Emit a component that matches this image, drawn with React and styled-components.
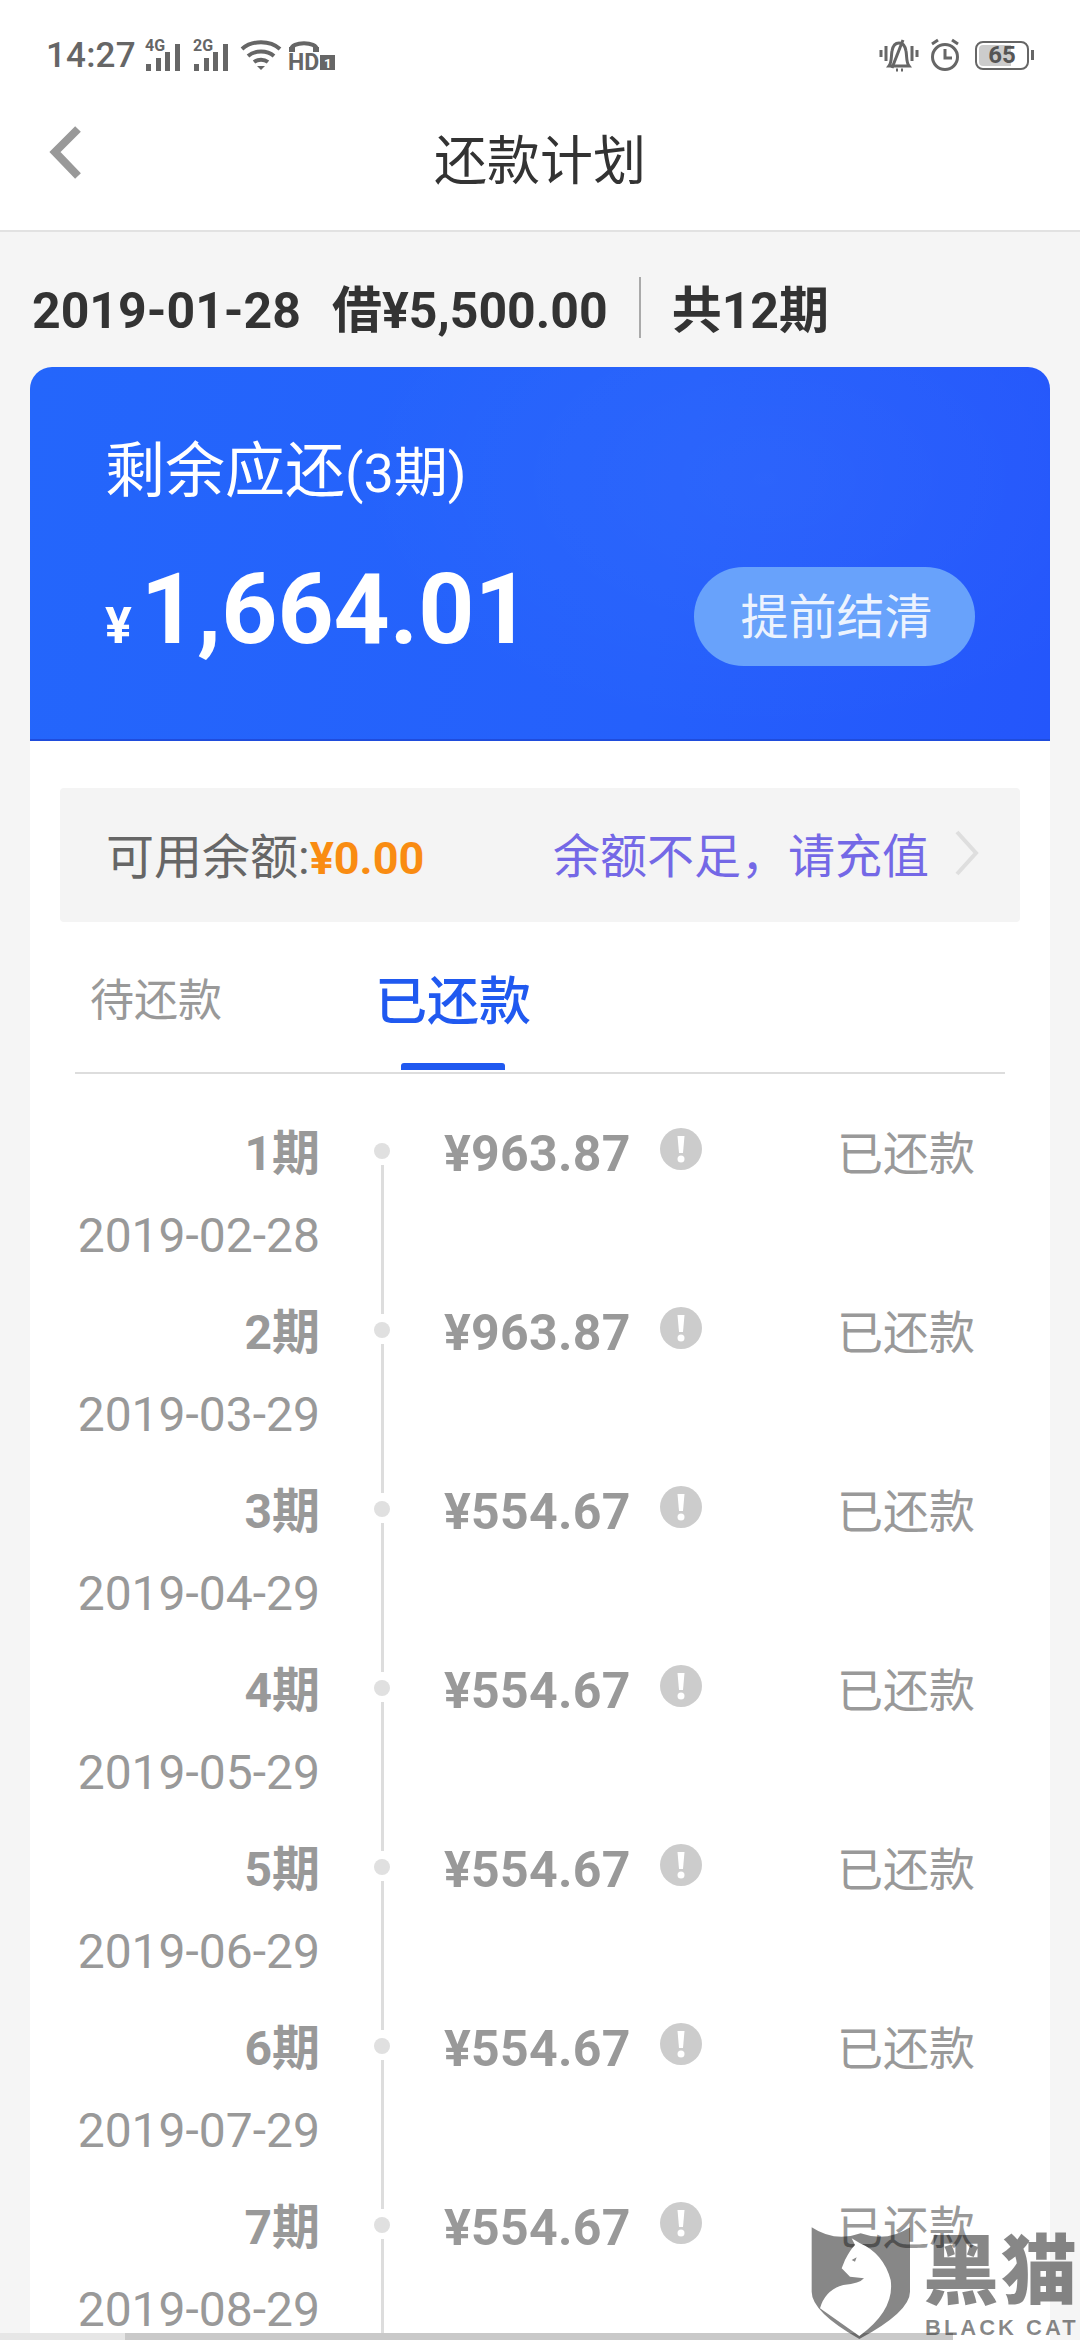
import React from "react";
import styled, { createGlobalStyle } from "styled-components";

const GlobalStyle = createGlobalStyle`
  html, body {
    margin: 0;
    padding: 0;
    background: #f5f5f5;
  }
  * {
    box-sizing: border-box;
  }
`;

const FONT = `Roboto, "Noto Sans CJK SC", sans-serif`;

const Page = styled.div`
  position: relative;
  width: 1080px;
  height: 2340px;
  overflow: hidden;
  background: #f5f5f5;
  font-family: ${FONT};
`;

const Header = styled.header`
  height: 232px;
  background: #fff;
  border-bottom: 2px solid #e2e2e2;
`;

const StatusBar = styled.div`
  height: 84px;
  padding: 26px 51px 0 46px;
  display: flex;
  align-items: center;
  justify-content: space-between;
  color: #666;
`;

const StatusGroup = styled.div`
  display: flex;
  align-items: center;
`;

const Time = styled.span`
  font-size: 35px;
  font-weight: 500;
  letter-spacing: 0.2px;
  margin-right: 8px;
`;

const Battery = styled.div`
  position: relative;
  width: 54px;
  height: 29px;
  margin-left: 14px;
  border: 2.5px solid #666;
  border-radius: 8px;
  display: flex;
  align-items: center;
  justify-content: center;
  font-size: 24px;
  font-weight: 700;
  color: #555;
  background: linear-gradient(to right, #ccc 0 68%, #fff 68%);
  background-clip: content-box;
  padding: 2px;

  &::after {
    content: "";
    position: absolute;
    right: -7px;
    top: 7px;
    width: 3px;
    height: 10px;
    background: #666;
  }
`;

const NavBar = styled.div`
  position: relative;
  height: 146px;
  display: flex;
  align-items: center;
  justify-content: center;
`;

const BackButton = styled.button`
  position: absolute;
  left: 47px;
  top: 42px;
  padding: 0;
  border: 0;
  background: none;
  display: flex;
`;

const Title = styled.h1`
  margin: 0;
  font-size: 53px;
  font-weight: 400;
  color: #333;
`;

const Summary = styled.div`
  height: 135px;
  padding: 22px 0 0 32px;
  display: flex;
  align-items: center;
  font-size: 50px;
  line-height: 70px;
  font-weight: 700;
  color: #333;
  white-space: nowrap;
`;

const SummaryLoan = styled.span`
  margin-left: 31px;
`;

const SummaryDivider = styled.span`
  width: 2px;
  height: 61px;
  margin: 0 31px 6px;
  background: #aaa;
`;

const Card = styled.main`
  margin: 0 30px;
  background: #fff;
  border-radius: 22px 22px 0 0;
  overflow: hidden;
`;

const Hero = styled.section`
  height: 374px;
  padding: 67px 75px 0;
  color: #fff;
  border-bottom: 2px solid #1f4cdc;
  background:
    radial-gradient(ellipse 420px 260px at 72% 30%, rgba(255, 255, 255, 0.035), rgba(255, 255, 255, 0)),
    linear-gradient(100deg, #2466fb 0%, #2560fb 62%, #2456fb 100%);
`;

const HeroLabel = styled.div`
  font-size: 60px;
  line-height: 76px;
  white-space: nowrap;
`;

const HeroLabelSmall = styled.span`
  font-size: 54px;
`;

const HeroRow = styled.div`
  margin-top: 55px;
  display: flex;
  align-items: flex-start;
  justify-content: space-between;
`;

const HeroAmount = styled.div`
  display: flex;
  align-items: baseline;
  margin-top: -14px;
  font-weight: 700;
  line-height: 114px;
`;

const HeroCurrency = styled.span`
  font-size: 50px;
  margin-right: 9px;
`;

const HeroValue = styled.span`
  font-size: 98px;
`;

const SettleButton = styled.button`
  width: 281px;
  height: 99px;
  padding: 0 0 8px 4px;
  border: 0;
  border-radius: 50px;
  background: #68a2fb;
  color: rgba(255, 255, 255, 0.88);
  font-family: inherit;
  font-size: 48px;
`;

const Balance = styled.div`
  height: 134px;
  margin: 47px 30px 0;
  padding: 0 40px 5px 46px;
  display: flex;
  align-items: center;
  justify-content: space-between;
  border-radius: 4px;
  background: #f4f4f4;
  white-space: nowrap;
`;

const BalanceLabel = styled.span`
  font-size: 48px;
  color: #666;
`;

const BalanceValue = styled.span`
  font-size: 45px;
  font-weight: 700;
  color: #f98c12;
`;

const TopUp = styled.div`
  display: flex;
  align-items: center;
  gap: 25px;
  font-size: 47px;
  color: #7468e6;
`;

const Tabs = styled.div`
  height: 152px;
  margin: 0 45px;
  padding-left: 15px;
  display: flex;
  align-items: center;
  border-bottom: 2px solid #ddd;
`;

const Tab = styled.div`
  position: relative;
  width: ${({ $active }) => ($active ? "157px" : "132px")};
  margin-left: ${({ $active }) => ($active ? "153px" : "0")};
  font-size: ${({ $active }) => ($active ? "52px" : "44px")};
  font-weight: ${({ $active }) => ($active ? 500 : 400)};
  color: ${({ $active }) => ($active ? "#2059f0" : "#999")};
  white-space: nowrap;

  ${({ $active }) =>
    $active &&
    `
    &::after {
      content: "";
      position: absolute;
      left: 26px;
      bottom: -35px;
      width: 104px;
      height: 7px;
      border-radius: 3px 3px 0 0;
      background: #2059f0;
    }
  `}
`;

const List = styled.div`
  margin-top: 37px;
`;

const Row = styled.div`
  height: 179px;
  display: grid;
  grid-template-columns: 290px 124px 1fr auto;
  color: #999;
  padding-right: 75px;
`;

const RowWhen = styled.div`
  padding-top: 2px;
  text-align: right;
  white-space: nowrap;
`;

const Period = styled.div`
  font-size: 48px;
  font-weight: 700;
  line-height: 82px;
`;

const DueDate = styled.div`
  font-size: 48px;
  line-height: 82px;
`;

const Axis = styled.div`
  display: flex;
  flex-direction: column;
  align-items: center;
`;

const AxisLine = styled.span`
  width: 3px;
  background: ${({ $hidden }) => ($hidden ? "transparent" : "#ddd")};
  height: ${({ $top }) => ($top ? "24px" : "auto")};
  flex: ${({ $top }) => ($top ? "none" : 1)};
`;

const Dot = styled.span`
  width: 16px;
  height: 16px;
  margin: 8px 0 6px;
  border-radius: 50%;
  background: #e0e0e0;
`;

const Amount = styled.div`
  display: flex;
  align-items: flex-start;
  height: 82px;
  font-size: 50px;
  font-weight: 700;
  line-height: 86px;
  letter-spacing: 0.3px;
`;

const InfoIcon = styled.span`
  width: 42px;
  height: 42px;
  margin: 17px 0 0 29px;
  border-radius: 50%;
  background: #ccc;
  display: flex;
`;

const RowStatus = styled.div`
  font-size: 46px;
  line-height: 86px;
`;

const BottomShade = styled.div`
  position: absolute;
  left: 0;
  right: 127px;
  bottom: 0;
  height: 7px;
  background: linear-gradient(to right, #e6e6e6 0 125px, #c9c9c9 125px);
`;

const Watermark = styled.div`
  position: absolute;
  left: 800px;
  top: 2210px;
  width: 280px;
  height: 130px;
  display: flex;
`;

const Brand = styled.div`
  margin-left: 123px;
  padding-top: 20px;
  color: rgba(0, 0, 0, 0.47);
`;

const BrandName = styled.div`
  font-size: 76px;
  line-height: 84px;
  font-weight: 900;
  letter-spacing: 2px;
  white-space: nowrap;
`;

const BrandLatin = styled.div`
  margin: 2px 0 0 2px;
  font-family: "Liberation Sans", sans-serif;
  font-size: 22px;
  line-height: 24px;
  font-weight: 700;
  letter-spacing: 3px;
  white-space: nowrap;
`;

const LogoMark = styled.svg`
  position: absolute;
  left: 0;
  top: 0;
`;

const SignalText = styled.text`
  font-family: Roboto, sans-serif;
  font-weight: 700;
  font-size: 16px;
  fill: #666;
`;

const HdText = styled(SignalText)`
  font-size: 23px;
`;

const Signal = ({ label }) => (
  <svg width="48" height="44" viewBox="0 -5 48 44">
    <SignalText x="1" y="13">{label}</SignalText>
    <rect x="2" y="26" width="5" height="7" fill="#666" />
    <rect x="12" y="20" width="5" height="13" fill="#666" />
    <rect x="21" y="14" width="5" height="19" fill="#666" />
    <rect x="31" y="6" width="5" height="27" fill="#666" />
  </svg>
);

const WifiIcon = () => (
  <svg width="42" height="32" viewBox="0 0 42 32" fill="none" stroke="#666" strokeWidth="4">
    <path d="M2 10C12 1 30 1 40 10" />
    <path d="M8 17C15 11 27 11 34 17" />
    <path d="M14 23C18 20 24 20 28 23" />
    <path d="M17 27H25L21 31Z" fill="#666" stroke="none" />
  </svg>
);

const HdIcon = () => (
  <svg width="52" height="44" viewBox="0 -6 52 44" style={{ marginLeft: 6 }}>
    <path d="M3 11C3 2 29 2 29 11" fill="none" stroke="#666" strokeWidth="4" />
    <rect x="1" y="8" width="6" height="5" fill="#666" />
    <rect x="25" y="8" width="6" height="5" fill="#666" />
    <HdText x="0" y="31">HD</HdText>
    <rect x="32" y="16" width="15" height="15" fill="#666" />
    <text x="36" y="29" fontSize="13" fontWeight="700" fill="#fff" fontFamily="Roboto, sans-serif">1</text>
  </svg>
);

const MuteBellIcon = () => (
  <svg width="42" height="36" viewBox="0 0 42 36" fill="none" stroke="#666" strokeWidth="3">
    <path d="M11 29C14 25 13 19 14 14C15 8 18 6 21 6C24 6 27 8 28 14C29 19 28 25 31 29Z" />
    <path d="M14 31L25 3" />
    <path d="M18 33H20M23 33H25" />
    <path d="M8 9V24M3 13V20M34 9V24M39 13V20" />
  </svg>
);

const AlarmIcon = () => (
  <svg width="32" height="34" viewBox="0 0 32 34" fill="none" stroke="#666" strokeWidth="3" style={{ marginLeft: 9 }}>
    <circle cx="16" cy="19" r="12.5" />
    <path d="M16 11V20H23" />
    <path d="M3 6L9 2M29 6L23 2" />
  </svg>
);

const BackIcon = () => (
  <svg width="36" height="54" viewBox="0 0 36 54" fill="none" stroke="#999" strokeWidth="8">
    <path d="M31 3L8 26L31 50" />
  </svg>
);

const ChevronIcon = () => (
  <svg width="26" height="46" viewBox="0 0 26 46" fill="none" stroke="#dedede" strokeWidth="4">
    <path d="M3 2L22 23L3 44" />
  </svg>
);

const ExclamationIcon = () => (
  <svg width="42" height="42" viewBox="0 0 42 42" fill="#fff">
    <path d="M17.5 8H24.5L23 25H19Z" />
    <circle cx="21" cy="31" r="3.5" />
  </svg>
);

const CatLogo = () => (
  <LogoMark width="130" height="130" viewBox="0 0 390 390">
    <path
      d="M35 52Q105 98 182 70Q260 98 330 52L330 245Q330 305 178 387Q35 305 35 245Z"
      fill="rgba(0,0,0,0.47)"
    />
    <path
      d="M155 85L180 100Q250 130 272 210Q285 300 178 378L60 295Q75 240 130 225Q180 220 192 205L150 200L125 175L135 150Q150 120 165 105Z"
      fill="#fff"
    />
    <path d="M155 150L170 142L165 155Z" fill="#888" />
  </LogoMark>
);

const PAYMENTS = [
  { period: "1期", date: "2019-02-28", amount: "¥963.87" },
  { period: "2期", date: "2019-03-29", amount: "¥963.87" },
  { period: "3期", date: "2019-04-29", amount: "¥554.67" },
  { period: "4期", date: "2019-05-29", amount: "¥554.67" },
  { period: "5期", date: "2019-06-29", amount: "¥554.67" },
  { period: "6期", date: "2019-07-29", amount: "¥554.67" },
  { period: "7期", date: "2019-08-29", amount: "¥554.67" },
];

const App = () => {
  return (
    <Page>
      <GlobalStyle />
      <Header>
        <StatusBar>
          <StatusGroup>
            <Time>14:27</Time>
            <Signal label="4G" />
            <Signal label="2G" />
            <WifiIcon />
            <HdIcon />
          </StatusGroup>
          <StatusGroup>
            <MuteBellIcon />
            <AlarmIcon />
            <Battery>65</Battery>
          </StatusGroup>
        </StatusBar>
        <NavBar>
          <BackButton>
            <BackIcon />
          </BackButton>
          <Title>还款计划</Title>
        </NavBar>
      </Header>

      <Summary>
        2019-01-28
        <SummaryLoan>借¥5,500.00</SummaryLoan>
        <SummaryDivider />
        共12期
      </Summary>

      <Card>
        <Hero>
          <HeroLabel>
            剩余应还<HeroLabelSmall>(3期)</HeroLabelSmall>
          </HeroLabel>
          <HeroRow>
            <HeroAmount>
              <HeroCurrency>¥</HeroCurrency>
              <HeroValue>1,664.01</HeroValue>
            </HeroAmount>
            <SettleButton>提前结清</SettleButton>
          </HeroRow>
        </Hero>

        <Balance>
          <BalanceLabel>
            可用余额:<BalanceValue>¥0.00</BalanceValue>
          </BalanceLabel>
          <TopUp>
            余额不足，请充值
            <ChevronIcon />
          </TopUp>
        </Balance>

        <Tabs>
          <Tab>待还款</Tab>
          <Tab $active>已还款</Tab>
        </Tabs>

        <List>
          {PAYMENTS.map((item, index) => (
            <Row key={item.period}>
              <RowWhen>
                <Period>{item.period}</Period>
                <DueDate>{item.date}</DueDate>
              </RowWhen>
              <Axis>
                <AxisLine $top $hidden={index === 0} />
                <Dot />
                <AxisLine />
              </Axis>
              <Amount>
                {item.amount}
                <InfoIcon>
                  <ExclamationIcon />
                </InfoIcon>
              </Amount>
              <RowStatus>已还款</RowStatus>
            </Row>
          ))}
        </List>
      </Card>

      <BottomShade />
      <Watermark>
        <CatLogo />
        <Brand>
          <BrandName>黑猫</BrandName>
          <BrandLatin>BLACK CAT</BrandLatin>
        </Brand>
      </Watermark>
    </Page>
  );
};

export default App;
